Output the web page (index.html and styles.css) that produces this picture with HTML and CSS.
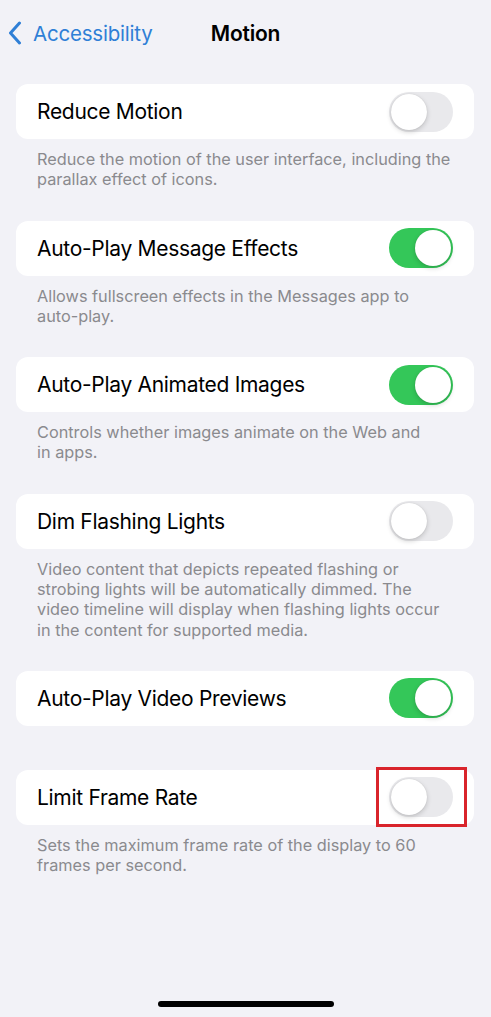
FILE: index.html
```html
<!DOCTYPE html>
<html lang="en">
<head>
    <meta charset="UTF-8">
    <meta name="viewport" content="width=device-width, initial-scale=1.0">
    <title>Motion</title>
    <link rel="stylesheet" href="styles.css">
</head>
<body>
    <header class="nav-bar">
        <a href="#" class="back-link">
            <svg class="chevron" width="14" height="24" viewBox="0 0 14 24">
                <path d="M11.5 2 L2.5 12 L11.5 22" fill="none" stroke="currentColor" stroke-width="3" stroke-linecap="round" stroke-linejoin="round"/>
            </svg>
            <span>Accessibility</span>
        </a>
        <h1 class="nav-title">Motion</h1>
        <div></div>
    </header>

    <main class="settings">
        <section class="group">
            <div class="cell">
                <span class="cell-label">Reduce Motion</span>
                <div class="switch"><span class="knob"></span></div>
            </div>
            <p class="footer-note">Reduce the motion of the user interface, including the parallax effect of icons.</p>
        </section>

        <section class="group">
            <div class="cell">
                <span class="cell-label">Auto-Play Message Effects</span>
                <div class="switch on"><span class="knob"></span></div>
            </div>
            <p class="footer-note">Allows fullscreen effects in the Messages app to auto-play.</p>
        </section>

        <section class="group">
            <div class="cell">
                <span class="cell-label">Auto-Play Animated Images</span>
                <div class="switch on"><span class="knob"></span></div>
            </div>
            <p class="footer-note">Controls whether images animate on the Web and in&nbsp;apps.</p>
        </section>

        <section class="group">
            <div class="cell">
                <span class="cell-label">Dim Flashing Lights</span>
                <div class="switch"><span class="knob"></span></div>
            </div>
            <p class="footer-note">Video content that depicts repeated flashing or strobing lights will be automatically dimmed. The video timeline will display when flashing lights occur in the content for supported media.</p>
        </section>

        <section class="group no-note">
            <div class="cell">
                <span class="cell-label">Auto-Play Video Previews</span>
                <div class="switch on"><span class="knob"></span></div>
            </div>
        </section>

        <section class="group">
            <div class="cell">
                <span class="cell-label">Limit Frame Rate</span>
                <div class="switch highlighted"><span class="knob"></span></div>
            </div>
            <p class="footer-note">Sets the maximum frame rate of the display to 60 frames per second.</p>
        </section>
    </main>

    <div class="home-indicator"></div>
</body>
</html>
```

FILE: styles.css
```css
/* General */
body {
    margin: 0;
    height: 1017px;
    background: #f2f2f7;
    font-family: Inter, "Noto Sans", sans-serif;
    color: #000;
    display: flex;
    flex-direction: column;
    overflow: hidden;
}

/* Navigation bar */
.nav-bar {
    display: grid;
    grid-template-columns: 1fr auto 1fr;
    align-items: center;
    height: 66px;
}

.back-link {
    display: flex;
    align-items: center;
    gap: 11px;
    padding-left: 8px;
    color: #2f7fd6;
    text-decoration: none;
    font-size: 20.5px;
    letter-spacing: -0.2px;
}

.chevron {
    flex: none;
}

.nav-title {
    margin: 0;
    font-size: 21px;
    font-weight: 600;
    letter-spacing: -0.2px;
}

/* Settings list */
.settings {
    flex: 1;
    padding: 18px 17px 0 16px;
}

.group {
    margin-bottom: 31px;
}

.group.no-note {
    margin-bottom: 44px;
}

.cell {
    display: flex;
    align-items: center;
    justify-content: space-between;
    height: 55px;
    padding: 0 21px;
    background: #fff;
    border-radius: 12px;
}

.cell-label {
    font-size: 21px;
    letter-spacing: -0.3px;
}

.footer-note {
    margin: 0;
    padding: 10px 21px 0;
    font-size: 16.3px;
    line-height: 20.3px;
    color: #8a8a8e;
}

/* Switch */
.switch {
    position: relative;
    display: flex;
    justify-content: flex-start;
    width: 64px;
    height: 40px;
    padding: 2px;
    box-sizing: border-box;
    border-radius: 20px;
    background: #e9e9ec;
}

.switch.on {
    justify-content: flex-end;
    background: #34c759;
}

.knob {
    width: 36px;
    height: 36px;
    border-radius: 50%;
    background: #fff;
    box-shadow: 0 2px 5px rgba(0, 0, 0, 0.18), 0 0 1px rgba(0, 0, 0, 0.15);
}

.switch.highlighted::after {
    content: "";
    position: absolute;
    top: -10px;
    bottom: -10px;
    left: -13px;
    right: -14px;
    border: 3px solid #d9242b;
}

/* Home indicator */
.home-indicator {
    align-self: center;
    width: 176px;
    height: 6px;
    margin-bottom: 10px;
    border-radius: 3px;
    background: #000;
}
```
